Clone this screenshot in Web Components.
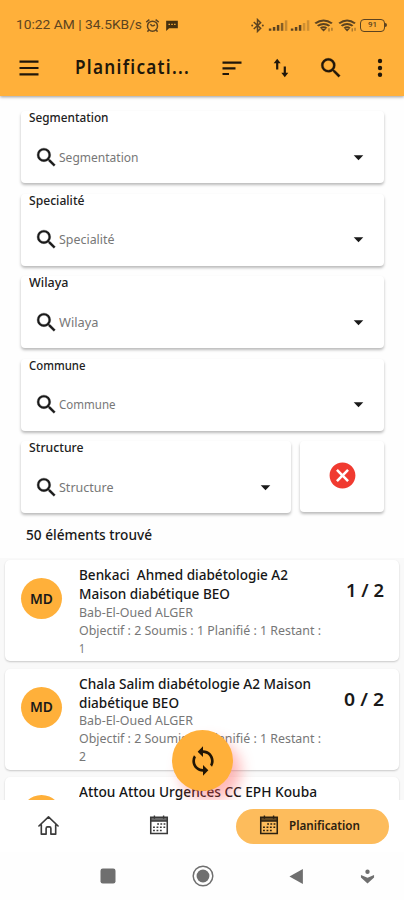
<!DOCTYPE html>
<html lang="fr">
<head>
<meta charset="utf-8">
<title>Planification</title>
<style>
html,body{margin:0;height:900px;overflow:hidden;background:#fefefe;font-family:"Noto Sans","Open Sans",sans-serif;color:#191919}
</style>
</head>
<body>
<plan-app></plan-app>
<script>
const define = (name, html, setup) => {
  const tpl = document.createElement('template');
  tpl.innerHTML = html;
  customElements.define(name, class extends HTMLElement {
    constructor() {
      super();
      this.attachShadow({mode: 'open'}).append(tpl.content.cloneNode(true));
    }
    connectedCallback() { if (setup) setup(this, this.shadowRoot); }
  });
};

/* One line of text, condensed or widened to the width given in "w". */
define('fit-text', `<style>
:host{display:block;white-space:pre;flex:none}
span{display:inline-block;transform-origin:0 50%}
</style><span><slot></slot></span>`, (el, root) => {
  const w = +el.getAttribute('w'), s = root.querySelector('span');
  el.style.width = w + 'px';
  s.style.transform = 'scaleX(' + w / s.getBoundingClientRect().width + ')';
});

const icons = {
  menu: '<path d="M2.500 5.600h19M2.500 12h19M2.500 18.400h19" stroke="currentColor" stroke-width="2.200"/>',
  sort: '<path d="M2.500 6.600h19M2.500 12.400h13M2.500 18h6.500" stroke="currentColor" stroke-width="2.200"/>',
  swap: '<path d="M8.200 13.500V5M15.800 10.500V19" fill="none" stroke="currentColor" stroke-width="2.200"/><path d="M4.700 7.300 8.200 2.800l3.500 4.500zM12.300 16.700l3.500 4.500 3.500-4.500z"/>',
  search: '<path d="M15.500 14h-.79l-.28-.27A6.471 6.471 0 0 0 16 9.500 6.500 6.500 0 1 0 9.500 16c1.610 0 3.090-.59 4.230-1.570l.27.28v.79l5 4.990L20.490 19l-4.990-5zm-6 0C7.010 14 5 11.990 5 9.500S7.010 5 9.500 5 14 7.010 14 9.500 11.990 14 9.500 14z" stroke="currentColor" stroke-width=".3"/>',
  more: '<circle cx="12" cy="5" r="2.200"/><circle cx="12" cy="12" r="2.200"/><circle cx="12" cy="18.700" r="2.200"/>',
  down: '<path d="M6.500 9.500l5.500 5.500 5.500-5.500z"/>',
  cancel: '<path d="M12 2C6.470 2 2 6.470 2 12s4.470 10 10 10 10-4.470 10-10S17.530 2 12 2zm5 13.590L15.590 17 12 13.410 8.410 17 7 15.590 10.590 12 7 8.410 8.410 7 12 10.590 15.590 7 17 8.410 13.410 12 17 15.590z"/>',
  sync: '<path d="M12 4V1L8 5l4 4V6c3.310 0 6 2.690 6 6 0 1.010-.25 1.970-.7 2.800l1.460 1.460A7.930 7.930 0 0 0 20 12c0-4.420-3.580-8-8-8zm0 14c-3.310 0-6-2.690-6-6 0-1.010.25-1.970.7-2.800L5.240 7.740A7.930 7.930 0 0 0 4 12c0 4.420 3.580 8 8 8v3l4-4-4-4v3z"/>',
  alarm: '<g fill="none" stroke="currentColor" stroke-width="2.400"><circle cx="12" cy="13" r="8"/><path d="M12 13 8.500 10M12 13l4-2M2 6.500 7 2.500M22 6.500l-5-4M6 19l-2 3M18 19l2 3"/></g>',
  chat: '<path d="M2 3h20v14H7l-5 5z"/><path d="M6 10h2.500M10.800 10h2.500M15.600 10h2.500" stroke="#ffb03a" stroke-width="2.200"/>',
  bt: '<path d="m6 6.500 11 10L12 21.500v-19l5 5-11 10" fill="none" stroke="currentColor" stroke-width="2.400"/><circle cx="3.500" cy="12" r="1.600"/><circle cx="20.500" cy="12" r="1.600"/>',
  signal: '<path d="M1 18h3v4H1zM5.800 15.500h3V22h-3zM10.600 12h3v10h-3z"/><path d="M15.400 8.500h3V22h-3z" opacity=".75"/><path d="M20.200 4h3v18h-3z" opacity=".35"/>',
  signal2: '<path d="M1 18h3v4H1zM5.800 15.500h3V22h-3zM10.600 12h3v10h-3z"/><path d="M15.400 8.500h3V22h-3zM20.200 4h3v18h-3z" opacity=".3"/>',
  wifi: '<g fill="none" stroke="currentColor" stroke-width="2.900"><path d="M1.500 8.500q10-9 20 0M4.500 12.700q7-6.400 14 0M8 16.500q3.500-3.500 7 0"/></g><path d="m8.500 17.500 3 4 3-4z"/><path d="M18 21.500v-5M21.500 15.500v5" stroke="currentColor" stroke-width="1.700" opacity=".55"/>',
  home: '<path d="M2 12.500 12 3l10 9.500M4.500 11v10h5v-6q0-1.500 1.500-1.500h2q1.500 0 1.500 1.500v6h5V11" fill="none" stroke="currentColor" stroke-width="1.700" stroke-linejoin="round" stroke-linecap="round"/>',
  cal: '<path d="M3 3.500h18v17.800H3z" fill="none" stroke="currentColor" stroke-width="1.700"/><path d="M3 3.500h18v4.200H3z" opacity=".75"/><path d="M7 1.500v3.600M17 1.500v3.600M3 7.700h18" stroke="currentColor" stroke-width="1.500"/><path d="M10 11h2M13.500 11h2M17 11h2M5.500 14.500h2M9.300 14.500h2M13 14.500h2M16.800 14.500h2M5.500 18h2M9.300 18h2M13 18h2" stroke="currentColor" stroke-width="1.600"/>',
  square: '<rect x="2" y="2" width="20" height="20" rx="3"/>',
  circle: '<circle cx="12" cy="12" r="10.700" fill="none" stroke="currentColor" stroke-width="1.600"/><circle cx="12" cy="12" r="7"/>',
  back: '<path d="M21 1.500v21L2 12z"/>',
  drop: '<circle cx="12" cy="4.300" r="3.500"/><path d="M1.500 9.500 12 14l10.500-4.500v4L12 23 1.500 13.500z"/>'
};
define('ui-icon', `<style>
:host{display:block;flex:none}
svg{display:block;width:100%;height:100%;fill:currentColor}
</style><svg viewBox="0 0 24 24"></svg>`, (el, root) => {
  const s = el.getAttribute('size');
  el.style.width = s + 'px';
  el.style.height = (el.getAttribute('h') || s) + 'px';
  const svg = root.querySelector('svg');
  if (el.hasAttribute('h')) svg.setAttribute('preserveAspectRatio', 'none');
  svg.innerHTML = icons[el.getAttribute('name')];
});

define('status-bar', `<style>
:host{display:flex;align-items:center;height:50px;padding:0 17px 0 16px;color:#5c4320;font:400 13px/18px Roboto,sans-serif}
.r{margin-left:auto;display:flex;align-items:center}
.bat{box-sizing:border-box;width:25px;height:13px;border:1.300px solid;border-radius:4px;display:flex;align-items:center;justify-content:center;font:500 8px/10px Roboto,sans-serif}
.tip{width:2px;height:4px;background:currentColor;border-radius:0 2px 2px 0}
</style>
<fit-text w="126">10:22 AM | 34.5KB/s</fit-text>
<ui-icon name="alarm" size="15" style="margin-left:3px"></ui-icon>
<ui-icon name="chat" size="14" h="13" style="margin-left:5px;color:#45300f"></ui-icon>
<div class="r">
<ui-icon name="bt" size="15" style="margin-right:3px"></ui-icon>
<ui-icon name="signal" size="20" h="14" style="margin-right:2px"></ui-icon>
<ui-icon name="signal2" size="20" h="14" style="margin-right:4px"></ui-icon>
<ui-icon name="wifi" size="20" h="15" style="margin-right:4px"></ui-icon>
<ui-icon name="wifi" size="19" h="15" style="margin-right:3px"></ui-icon>
<div class="bat">91</div><div class="tip"></div></div>`);

define('app-bar', `<style>
:host{display:flex;flex-direction:column;height:96px;background:#ffb03a;box-shadow:0 1px 3px rgba(0,0,0,.4);position:relative;z-index:2;flex:none;color:#21170a}
.bar{display:flex;align-items:center;height:35px;padding:0 13px 0 17px}
fit-text{margin-left:34px;font:600 19px/26px "Noto Sans",sans-serif;letter-spacing:1.400px;padding-bottom:1px}
</style><status-bar></status-bar>
<div class="bar"><ui-icon name="menu" size="24"></ui-icon>
<fit-text w="115">Planificati...</fit-text>
<ui-icon name="sort" size="24" style="margin-left:30px"></ui-icon>
<ui-icon name="swap" size="24" style="margin-left:25px"></ui-icon>
<ui-icon name="search" size="26" style="margin-left:25px"></ui-icon>
<ui-icon name="more" size="24" style="margin-left:24px"></ui-icon></div>`);

define('filter-card', `<style>
:host{display:block;box-sizing:border-box;height:72px;background:#fff;border-radius:4px;box-shadow:0 2px 3px rgba(0,0,0,.27);padding:0 15px 0 8px}
.lab{font:500 12.500px/14px "Noto Sans",sans-serif;color:#222}
.row{display:flex;align-items:center;height:24px;margin-top:20px}
.ph{font:400 12.500px/18px "Noto Sans",sans-serif;color:#777;padding-top:1px}
.arr{margin-left:auto}
</style><div class="lab"></div>
<div class="row"><ui-icon name="search" size="25" style="margin-left:5px"></ui-icon><div class="ph"></div><ui-icon class="arr" name="down" size="21"></ui-icon></div>`, (el, root) => {
  for (const cls of ['lab', 'ph']) {
    const t = document.createElement('fit-text');
    t.textContent = el.getAttribute('label');
    t.setAttribute('w', el.getAttribute('w'));
    root.querySelector('.' + cls).replaceChildren(t);
  }
});

define('filter-panel', `<style>
:host{display:flex;flex-direction:column;gap:10.500px;padding:15px 20px 0 21px;flex:none;box-sizing:border-box;height:462px}
.row{display:flex;gap:9px}
.clear{width:84px;height:71px;box-sizing:border-box;padding-bottom:2px;display:flex;align-items:center;justify-content:center;background:#fff;border-radius:4px;box-shadow:0 2px 3px rgba(0,0,0,.27);color:#f03a30}
filter-card{flex:none}
.row filter-card{flex:1}
.count{font:500 14px/18px "Noto Sans",sans-serif;margin:2px 0 0 5px}
</style>
<filter-card label="Segmentation" w="79.500"></filter-card>
<filter-card label="Specialité" w="55.500"></filter-card>
<filter-card label="Wilaya" w="39.500"></filter-card>
<filter-card label="Commune" w="56.500"></filter-card>
<div class="row"><filter-card label="Structure" w="54.500"></filter-card><div class="clear"><ui-icon name="cancel" size="31"></ui-icon></div></div>
<div class="count"><fit-text w="126">50 éléments trouvé</fit-text></div>`);

define('visit-item', `<style>
:host{display:flex;box-sizing:border-box;height:101px;margin:0 5px;padding:5px 15px 0 16px;background:#fff;border-radius:5px;box-shadow:0 1px 2px rgba(0,0,0,.2);flex:none}
.av{width:41px;height:41px;border-radius:50%;background:#ffb03a;display:flex;align-items:center;justify-content:center;margin-top:13px;font:600 14px/18px "Noto Sans",sans-serif;flex:none}
.txt{margin-left:17px}
.n{display:block;font:500 14px/19.300px "Noto Sans",sans-serif;color:#161616}
.s{display:block;font:400 12px/18px "Noto Sans",sans-serif;color:#777}
.score{margin:12px 0 0 auto;font:600 18px/26px "Noto Sans",sans-serif}
</style><div class="av"><slot name="badge"></slot></div><div class="txt"><slot name="name" class="n"></slot><slot name="sub" class="s"></slot></div><div class="score"><slot name="score"></slot></div>`);

define('visit-list', `<style>
:host{display:flex;flex-direction:column;gap:7.500px;background:#f9f9f9;height:242px;box-sizing:border-box;padding-top:2px;overflow:hidden;position:relative;flex:none}
.fab{position:absolute;left:172px;top:172px;width:61px;height:61px;border-radius:50%;background:#ffb03a;display:flex;align-items:center;justify-content:center;color:#201505;box-shadow:8px 10px 14px rgba(255,80,80,.4)}
</style>
<visit-item><fit-text slot="badge" w="23">MD</fit-text><fit-text slot="name" w="209">Benkaci  Ahmed diabétologie A2</fit-text><fit-text slot="name" w="151">Maison diabétique BEO</fit-text><fit-text slot="sub" w="114">Bab-El-Oued ALGER</fit-text><fit-text slot="sub" w="242">Objectif : 2 Soumis : 1 Planifié : 1 Restant :</fit-text><fit-text slot="sub" w="6">1</fit-text><fit-text slot="score" w="38">1 / 2</fit-text></visit-item>
<visit-item><fit-text slot="badge" w="23">MD</fit-text><fit-text slot="name" w="232">Chala Salim diabétologie A2 Maison</fit-text><fit-text slot="name" w="100">diabétique BEO</fit-text><fit-text slot="sub" w="114">Bab-El-Oued ALGER</fit-text><fit-text slot="sub" w="242">Objectif : 2 Soumis : 1 Planifié : 1 Restant :</fit-text><fit-text slot="sub" w="7">2</fit-text><fit-text slot="score" w="40">0 / 2</fit-text></visit-item>
<visit-item><fit-text slot="name" w="238">Attou Attou Urgences CC EPH Kouba</fit-text></visit-item>
<div class="fab"><ui-icon name="sync" size="32"></ui-icon></div>`);

define('tab-bar', `<style>
:host{display:flex;align-items:center;height:52px;background:#fff;padding:0 15px 0 37px;flex:none;color:#3a3a3a}
.pill{margin-left:auto;width:153px;height:35px;border-radius:18px;background:#fdbc5c;display:flex;align-items:center;box-sizing:border-box;padding-left:22px;color:#2c2110}
fit-text{font:600 12px/18px "Noto Sans",sans-serif;margin-left:9px}
</style><ui-icon name="home" size="23" style="margin-top:-2px"></ui-icon><ui-icon name="cal" size="22" style="margin:-2px 0 0 88px"></ui-icon>
<div class="pill"><ui-icon name="cal" size="22" style="margin-top:-2px"></ui-icon><fit-text w="71">Planification</fit-text></div>`);

define('system-nav', `<style>
:host{display:flex;align-items:center;height:48px;padding-left:99px;color:#6f6f6f;flex:none}
</style><ui-icon name="square" size="18"></ui-icon><ui-icon name="circle" size="22" style="margin-left:74.500px"></ui-icon><ui-icon name="back" size="17" style="margin-left:74px"></ui-icon><ui-icon name="drop" size="15" style="margin-left:55px"></ui-icon>`);

define('plan-app', `<style>
:host{display:flex;flex-direction:column;width:404px;height:900px;overflow:hidden}
</style><app-bar></app-bar><filter-panel></filter-panel><visit-list></visit-list><tab-bar></tab-bar><system-nav></system-nav>`);
</script>
</body>
</html>
